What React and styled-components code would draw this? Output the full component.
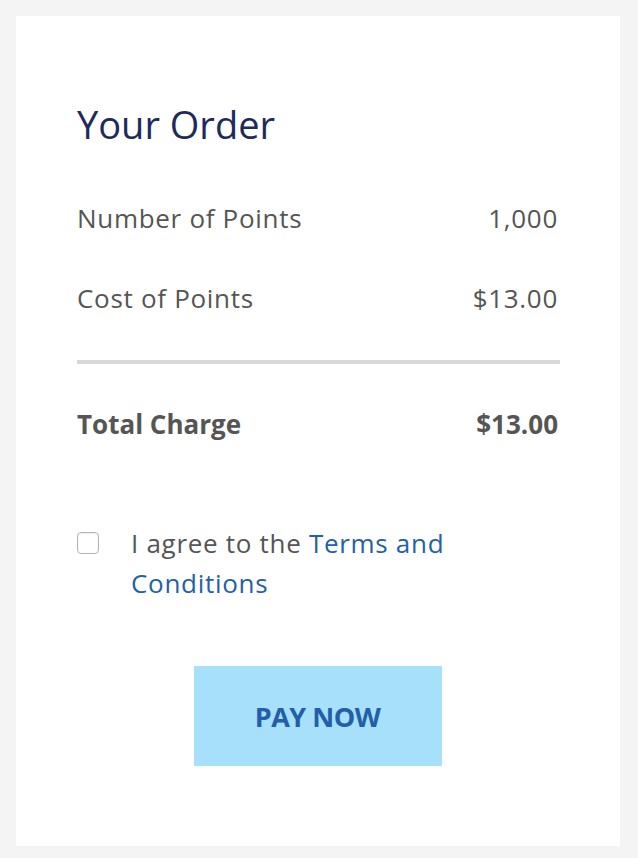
import React, { useState } from 'react';
import styled, { createGlobalStyle } from 'styled-components';

const GlobalStyle = createGlobalStyle`
	html, body {
		margin: 0;
		padding: 0;
		background: #f4f4f4;
	}
	body {
		font-family: "Open Sans", "Noto Sans", sans-serif;
		color: #555555;
	}
`

const Page = styled.div`
	padding: 16px;
	box-sizing: border-box;
	min-height: 858px;
`

const Card = styled.div`
	width: 604px;
	height: 830px;
	box-sizing: border-box;
	background: #ffffff;
	padding: 84px 62px 0 61px;
`

const Title = styled.h1`
	margin: 0 0 30px;
	font-size: 38px;
	line-height: 48px;
	font-weight: 400;
	color: #1f2a5c;
`

const Row = styled.div`
	display: flex;
	justify-content: space-between;
	align-items: center;
	height: 80px;
	font-size: 26px;
	font-weight: ${props => (props.bold ? 700 : 400)};
	color: #555555;
	letter-spacing: ${props => (props.bold ? '0' : '0.7px')};
`

const Divider = styled.hr`
	margin: 22px -2px 20px 0;
	border: 0;
	height: 4px;
	background: #d8d8d8;
`

const Agree = styled.div`
	display: flex;
	align-items: flex-start;
	margin-top: 59px;
	font-size: 26px;
	line-height: 40px;
	letter-spacing: 0.7px;
	color: #555555;
`

const AgreeText = styled.label`
	max-width: 340px;
	cursor: pointer;
`

const Box = styled.input`
	appearance: none;
	flex: none;
	width: 22px;
	height: 22px;
	margin: 9px 32px 0 0;
	border: 1px solid #b4b4b4;
	border-radius: 4px;
	background: #ffffff;
	box-shadow: inset 0 1px 2px rgba(0, 0, 0, 0.08);
	cursor: pointer;

	&:checked {
		background: #2460a7;
		border-color: #2460a7;
	}
`

const Link = styled.a`
	color: #2460a7;
	text-decoration: none;
`

const Actions = styled.div`
	display: flex;
	justify-content: center;
	margin-top: 63px;
`

const PayButton = styled.button`
	width: 248px;
	height: 100px;
	border: 0;
	background: #a6e0fa;
	color: #235ea8;
	font-family: inherit;
	font-size: 27px;
	font-weight: 700;
	letter-spacing: -0.5px;
	text-transform: uppercase;
	cursor: pointer;
`

export default function App() {
	const [agreed, setAgreed] = useState(false);

	return (
		<Page>
			<GlobalStyle />
			<Card>
				<Title>Your Order</Title>
				<Row>
					<span>Number of Points</span>
					<span>1,000</span>
				</Row>
				<Row>
					<span>Cost of Points</span>
					<span>$13.00</span>
				</Row>
				<Divider />
				<Row bold>
					<span>Total Charge</span>
					<span>$13.00</span>
				</Row>
				<Agree>
					<Box id="agree" type="checkbox" checked={agreed} onChange={e => setAgreed(e.target.checked)} />
					<AgreeText htmlFor="agree">
						I agree to the <Link href="#terms">Terms and Conditions</Link>
					</AgreeText>
				</Agree>
				<Actions>
					<PayButton>Pay Now</PayButton>
				</Actions>
			</Card>
		</Page>
	);
}
